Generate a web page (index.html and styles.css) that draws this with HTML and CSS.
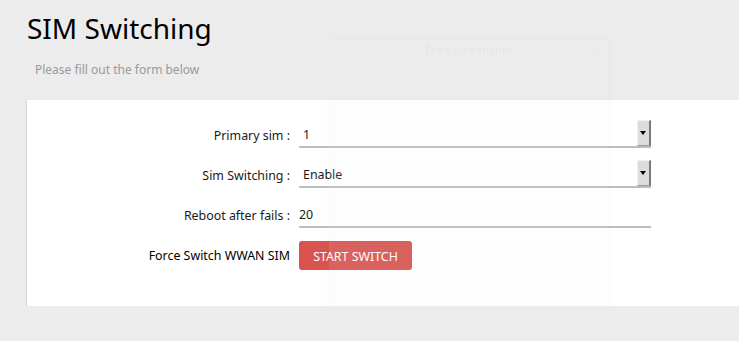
FILE: index.html
```html
<!DOCTYPE html>
<html lang="en">
<head>
  <meta charset="UTF-8">
  <title>SIM Switching</title>
  <link rel="stylesheet" href="styles.css">
</head>
<body>
  <h1>SIM Switching</h1>
  <p class="subtitle">Please fill out the form below</p>

  <div class="card">
    <form class="form">
      <label class="lbl" for="primary">Primary sim :</label>
      <div class="field select-wrap">
        <select id="primary">
          <option>1</option>
          <option>2</option>
        </select>
        <span class="arrow"></span>
      </div>

      <label class="lbl" for="switching">Sim Switching :</label>
      <div class="field select-wrap">
        <select id="switching">
          <option>Enable</option>
          <option>Disable</option>
        </select>
        <span class="arrow"></span>
      </div>

      <label class="lbl" for="fails">Reboot after fails :</label>
      <div class="field">
        <input id="fails" type="text" value="20">
      </div>

      <span class="lbl plain">Force Switch WWAN SIM</span>
      <div class="btn-row">
        <button type="button" class="btn">START SWITCH</button>
      </div>
    </form>
  </div>

  <!-- leftover of the screenshot tool window -->
  <div class="ghost">
    <div class="ghost-bar">
      <span class="ghost-title">Take Screenshot</span>
      <span class="ghost-ctrl">&ndash;&nbsp;&nbsp;&nbsp;&times;</span>
    </div>
  </div>
</body>
</html>
```

FILE: styles.css
```css
body {
  margin: 0;
  padding: 0;
  background-color: #ececec;
  font-family: "Noto Sans", "Open Sans", sans-serif;
  color: #000;
  position: relative;
  overflow: hidden;
}

h1 {
  font-size: 28px;
  font-weight: normal;
  margin: 0;
  padding: 8px 0 0 27px;
  line-height: 40px;
}

.subtitle {
  margin: 0;
  padding: 14px 0 0 35px;
  font-size: 12px;
  line-height: 16px;
  color: #9a9a9a;
}

.card {
  margin: 22px 0 0 27px;
  background: #fff;
  padding: 20px 0 36px 0;
  box-shadow: 0 1px 2px rgba(0,0,0,0.25);
}

.form {
  display: grid;
  grid-template-columns: 263px 352px;
  column-gap: 9px;
  row-gap: 12px;
  align-items: center;
}

.lbl {
  text-align: right;
  font-size: 12.4px;
  color: #1a1a1a;
  padding-top: 3px;
}

.lbl.plain {
  color: #000;
  padding-top: 1px;
}

.field {
  position: relative;
  height: 28px;
  border-bottom: 2px solid #bdbdbd;
  box-sizing: border-box;
}

.field select,
.field input {
  appearance: none;
  -webkit-appearance: none;
  border: none;
  outline: none;
  background: transparent;
  width: 100%;
  height: 26px;
  padding: 3px 0 0 4px;
  margin: 0;
  font-family: inherit;
  font-size: 12.4px;
  color: #1a1a1a;
  box-sizing: border-box;
}

.field input {
  padding-left: 0;
}

.arrow {
  position: absolute;
  right: 0;
  top: 0;
  width: 14px;
  height: 26px;
  box-sizing: border-box;
  background: #dcdcdc;
  border-top: 1px solid #f0f0f0;
  border-left: 1px solid #f0f0f0;
  border-right: 2px solid #7a7a7a;
  border-bottom: 1px solid #9a9a9a;
  pointer-events: none;
}

.arrow::after {
  content: "";
  position: absolute;
  left: 2px;
  top: 10px;
  border-left: 3px solid transparent;
  border-right: 3px solid transparent;
  border-top: 4px solid #000;
}

.btn-row {
  padding-top: 1px;
}

.btn {
  background: #d9534f;
  color: #fff;
  border: none;
  border-radius: 3px;
  height: 29px;
  width: 113px;
  font-family: inherit;
  font-size: 12.4px;
  padding: 1px 0 0 0;
}

.ghost {
  position: absolute;
  left: 329px;
  top: 40px;
  width: 280px;
  height: 290px;
  background: rgba(235,235,235,0.1);
  border-radius: 3px;
  box-shadow: 0 0 6px rgba(0,0,0,0.03);
}

.ghost-bar {
  position: relative;
  height: 20px;
  text-align: center;
  font-size: 11px;
  font-weight: bold;
  line-height: 20px;
  color: rgba(0,0,0,0.03);
}

.ghost-ctrl {
  position: absolute;
  right: 8px;
  top: 0;
  font-weight: bold;
}
```
